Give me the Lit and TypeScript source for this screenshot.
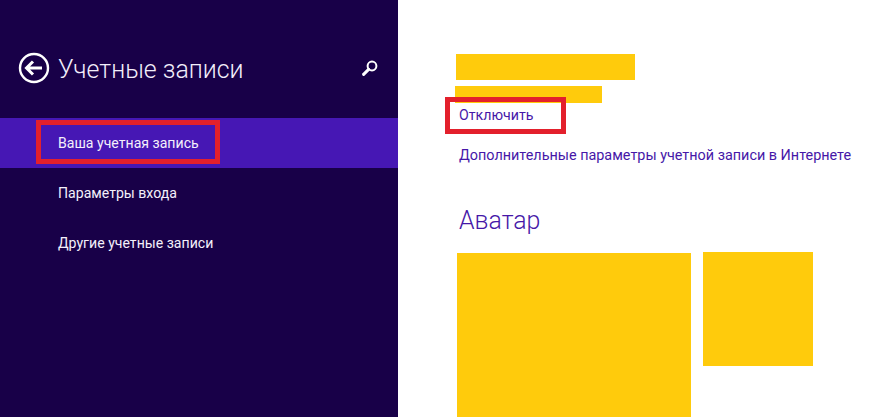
import { LitElement, html, css } from "lit";
import { customElement } from "lit/decorators.js";

@customElement("app-root")
export class AppRoot extends LitElement {
  static styles = css`
    :host { display: block; width: 887px; height: 417px; overflow: hidden; position: relative; background: #fff;
      font-family: Roboto, "Open Sans", sans-serif; }
    .page { display: flex; height: 417px; }
    .side { width: 398px; flex: none; background: #180048; color: #fff; display: flex; flex-direction: column; padding-top: 49px; box-sizing: border-box; }
    .head { display: flex; align-items: center; height: 38px; padding-left: 18px; margin-bottom: 31px; }
    .back { width: 32px; height: 32px; margin-right: 8px; flex: none; }
    .title { font-size: 24.9px; font-weight: 300; line-height: 38px; white-space: nowrap; flex: 1; color: #f2eefa; padding-top: 4px; }
    .search { width: 18px; height: 18px; margin-right: 19px; flex: none; }
    .item { height: 50px; display: flex; align-items: center; padding-left: 58px; font-size: 14.1px; color: #f4f0fb; white-space: nowrap; padding-bottom: 1px; box-sizing: border-box; }
    .item.sel { background: #4617b4; }
    .main { flex: 1; padding: 54px 0 0 58px; display: flex; flex-direction: column; align-items: flex-start; min-width: 0; }
    .y { background: #ffcb0c; flex: none; }
    .bar1 { width: 179px; height: 26px; }
    .bar2 { width: 147px; height: 17px; margin: 6px 0 0 -1px; }
    .link { color: #4617a8; font-size: 14.4px; white-space: nowrap; line-height: 20px; margin-left: 3px; }
    .l1 { margin-top: 2px; font-size: 14.2px; }
    .l2 { margin-top: 21px; }
    h2 { font-size: 24.9px; font-weight: 300; color: #4617a8; margin: 38px 0 0 3px; line-height: 34px; }
    .avatars { display: flex; gap: 12px; align-items: flex-start; margin: 14px 0 0 1px; }
    .a1 { width: 234px; height: 170px; margin-top: 1px; }
    .a2 { width: 110px; height: 114px; }
    .mark { position: absolute; border: 5px solid #e3202c; box-sizing: border-box; }
    .m1 { left: 36px; top: 120px; width: 184px; height: 44px; }
    .m2 { left: 445px; top: 97px; width: 121px; height: 37px; }
  `;

  render() {
    return html`
      <div class="page">
        <aside class="side">
          <div class="head">
            <svg class="back" viewBox="0 0 32 32" fill="none" stroke="#fff">
              <circle cx="16" cy="16" r="14" stroke-width="2.4" />
              <path d="M8.5 16H24M15 9.5L8.5 16L15 22.5" stroke-width="3" />
            </svg>
            <div class="title">Учетные записи</div>
            <svg class="search" viewBox="0 0 18 18" fill="none" stroke="#fff">
              <circle cx="11" cy="7" r="4.4" stroke-width="2" />
              <path d="M7.6 10.4L2.6 15.4" stroke-width="3" stroke-linecap="round" />
            </svg>
          </div>
          <div class="item sel">Ваша учетная запись</div>
          <div class="item">Параметры входа</div>
          <div class="item">Другие учетные записи</div>
        </aside>
        <main class="main">
          <div class="y bar1"></div>
          <div class="y bar2"></div>
          <div class="link l1">Отключить</div>
          <div class="link l2">Дополнительные параметры учетной записи в Интернете</div>
          <h2>Аватар</h2>
          <div class="avatars">
            <div class="y a1"></div>
            <div class="y a2"></div>
          </div>
        </main>
      </div>
      <div class="mark m1"></div>
      <div class="mark m2"></div>
    `;
  }
}
